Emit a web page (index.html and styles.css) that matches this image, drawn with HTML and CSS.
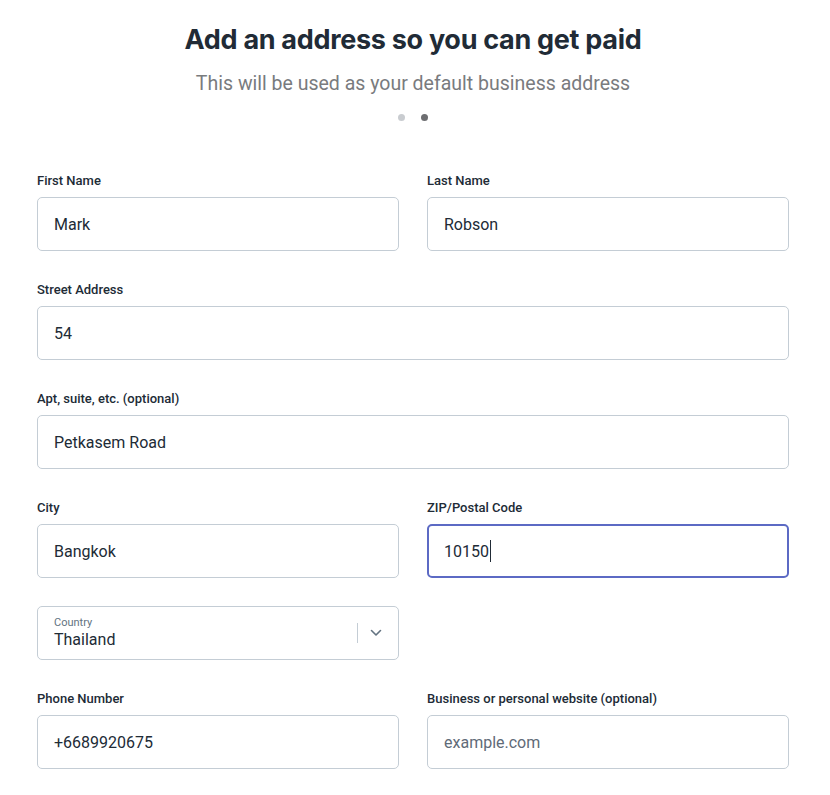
FILE: index.html
```html
<!DOCTYPE html>
<html lang="en">
<head>
    <meta charset="UTF-8">
    <meta name="viewport" content="width=device-width, initial-scale=1.0">
    <title>Business Address</title>
    <link rel="stylesheet" href="styles.css">
</head>
<body>
    <div class="container">
        <div class="heading">
            <h1>Add an address so you can get paid</h1>
            <p class="subtitle">This will be used as your default business address</p>
            <div class="steps">
                <span class="dot"></span>
                <span class="dot active"></span>
            </div>
        </div>

        <form class="address-form">
            <div class="row">
                <div class="field">
                    <label for="firstName">First Name</label>
                    <input id="firstName" type="text" value="Mark">
                </div>
                <div class="field">
                    <label for="lastName">Last Name</label>
                    <input id="lastName" type="text" value="Robson">
                </div>
            </div>

            <div class="field">
                <label for="street">Street Address</label>
                <input id="street" type="text" value="54">
            </div>

            <div class="field">
                <label for="apt">Apt, suite, etc. (optional)</label>
                <input id="apt" type="text" value="Petkasem Road">
            </div>

            <div class="row tight">
                <div class="field">
                    <label for="city">City</label>
                    <input id="city" type="text" value="Bangkok">
                </div>
                <div class="field">
                    <label for="zip">ZIP/Postal Code</label>
                    <div class="input-wrap">
                        <input id="zip" class="focused" type="text" value="10150">
                        <span class="caret"></span>
                    </div>
                </div>
            </div>

            <div class="row">
                <div class="field">
                    <div class="select">
                        <div class="select-text">
                            <span class="select-label">Country</span>
                            <span class="select-value">Thailand</span>
                        </div>
                        <span class="select-divider"></span>
                        <svg class="chevron" width="12" height="8" viewBox="0 0 12 8">
                            <path d="M1.5 1.5 L6 6 L10.5 1.5" fill="none" stroke="#637381" stroke-width="1.6" stroke-linecap="round" stroke-linejoin="round"/>
                        </svg>
                    </div>
                </div>
                <div class="field"></div>
            </div>

            <div class="row">
                <div class="field">
                    <label for="phone">Phone Number</label>
                    <input id="phone" type="text" value="+6689920675">
                </div>
                <div class="field">
                    <label for="website">Business or personal website (optional)</label>
                    <input id="website" type="text" placeholder="example.com">
                </div>
            </div>
        </form>
    </div>
</body>
</html>
```

FILE: styles.css
```css
body {
    font-family: Roboto, "Noto Sans", sans-serif;
    background-color: #fff;
    color: #212b36;
    margin: 0;
}
.container {
    width: 752px;
    margin: 0 0 0 37px;
    padding-top: 20px;
}
.heading {
    text-align: center;
}
h1 {
    font-family: Inter, Roboto, sans-serif;
    font-size: 27px;
    font-weight: 700;
    line-height: 40px;
    margin: 0;
    color: #212b36;
    letter-spacing: -0.3px;
}
.subtitle {
    font-size: 19.5px;
    line-height: 26px;
    color: #797b7e;
    margin: 11px 0 0;
}
.steps {
    display: flex;
    justify-content: center;
    gap: 16px;
    margin-top: 17px;
}
.dot {
    width: 7px;
    height: 7px;
    border-radius: 50%;
    background-color: #c9ccd0;
}
.dot.active {
    background-color: #6d6e71;
}
.address-form {
    margin-top: 50px;
}
.row {
    display: grid;
    grid-template-columns: 1fr 1fr;
    gap: 28px;
}
.field {
    margin-bottom: 29px;
}
.row.tight .field {
    margin-bottom: 28px;
}
label {
    display: block;
    font-size: 13px;
    font-weight: 500;
    line-height: 18px;
    padding-top: 1px;
    margin-bottom: 7px;
    color: #212b36;
}
input {
    box-sizing: border-box;
    width: 100%;
    height: 54px;
    padding: 0 16px;
    border: 1px solid #c4cdd5;
    border-radius: 5px;
    font-family: Roboto, sans-serif;
    font-size: 16px;
    color: #212b36;
    background: #fff;
    outline: none;
}
input::placeholder {
    color: #5f6b78;
}
input.focused {
    border: 2px solid #5c6ac4;
    padding: 0 15px;
    caret-color: transparent;
}
.input-wrap {
    position: relative;
}
.caret {
    position: absolute;
    left: 63px;
    top: 16px;
    width: 1px;
    height: 22px;
    background-color: #212b36;
}
.select {
    box-sizing: border-box;
    height: 54px;
    border: 1px solid #c4cdd5;
    border-radius: 5px;
    display: flex;
    align-items: center;
    padding: 0 16px;
}
.select-text {
    flex: 1;
    display: flex;
    flex-direction: column;
}
.select-label {
    font-size: 11px;
    line-height: 14px;
    color: #637381;
}
.select-value {
    font-size: 16px;
    line-height: 20px;
    color: #212b36;
}
.select-divider {
    width: 1px;
    height: 20px;
    background-color: #c4cdd5;
    margin-right: 12px;
}
.chevron {
    display: block;
}
```
